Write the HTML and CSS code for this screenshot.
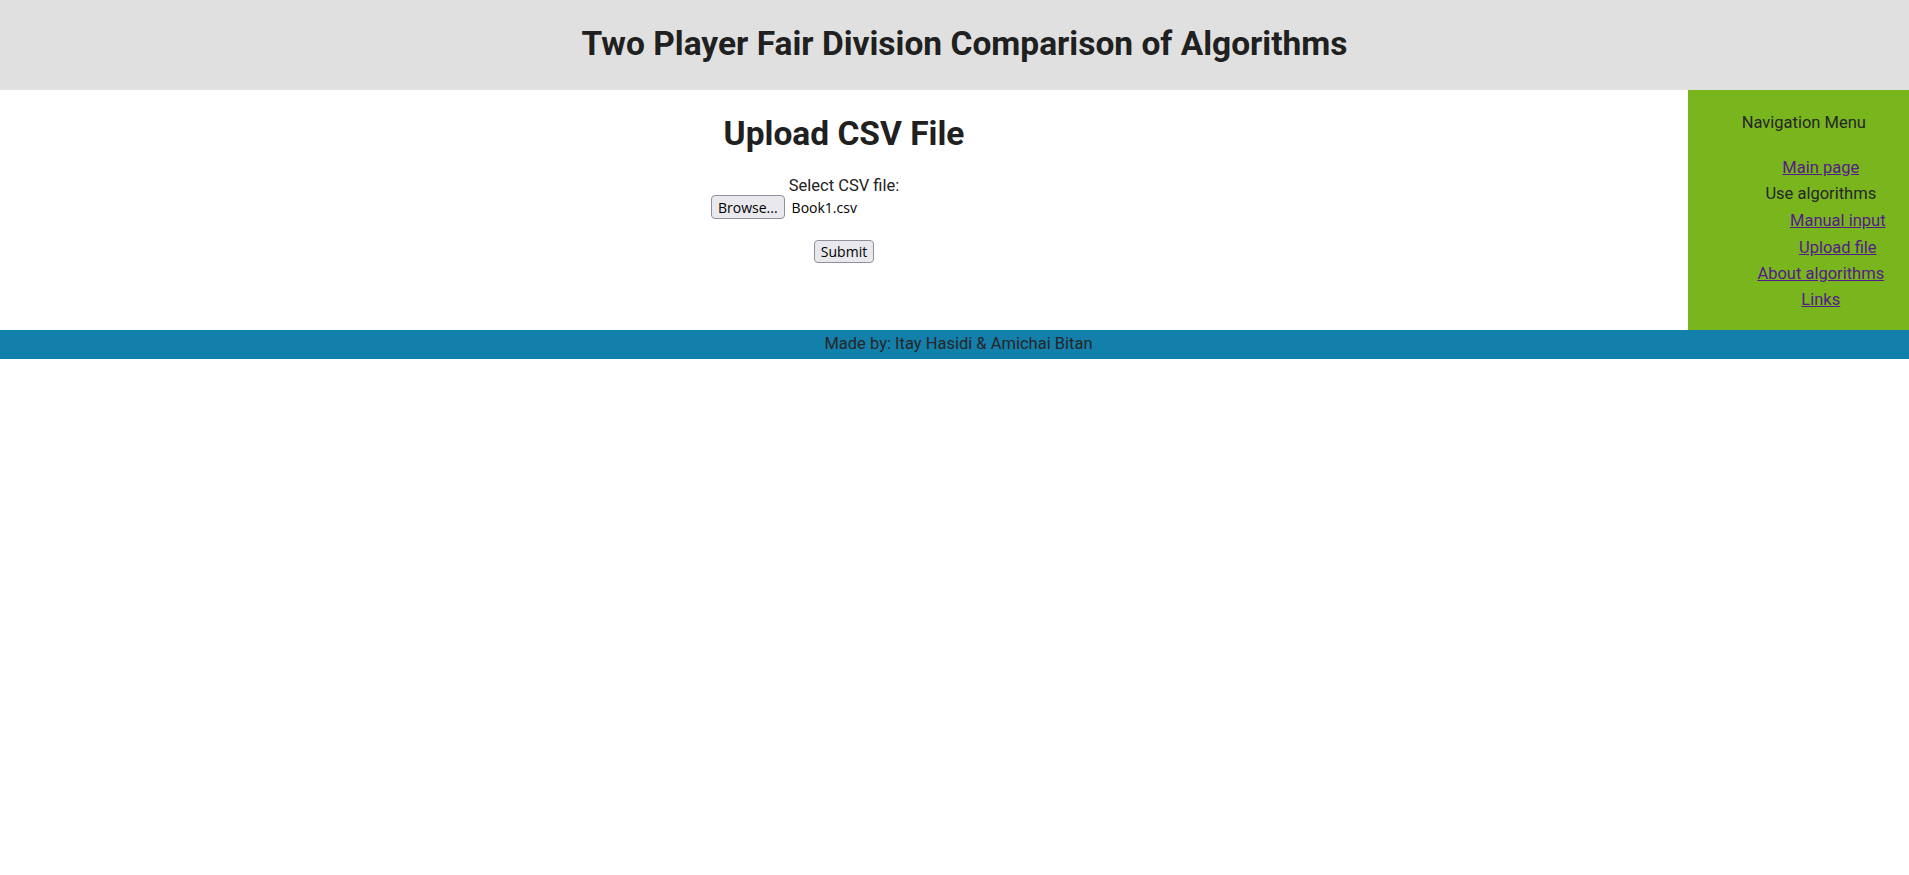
FILE: index.html
```html
<!DOCTYPE html>
<html lang="en">
<head>
<meta charset="utf-8">
<title>Upload CSV File</title>
<link rel="stylesheet" href="styles.css">
</head>
<body>
<header class="site-header">
  <h1 class="site-title">Two Player Fair Division Comparison of Algorithms</h1>
</header>
<div class="layout">
  <main class="content">
    <h1 class="page-title">Upload CSV File</h1>
    <form class="upload-form">
      <label class="field-label">Select CSV file:</label>
      <span class="file-input">
        <span class="btn">Browse...</span>
        <span class="file-name">Book1.csv</span>
      </span>
      <span class="btn submit">Submit</span>
    </form>
  </main>
  <nav class="side-nav">
    <p class="nav-title">Navigation Menu</p>
    <ul class="nav-list">
      <li><a class="nav-link" href="#">Main page</a></li>
      <li>Use algorithms
        <ul class="nav-sub">
          <li><a class="nav-link" href="#">Manual input</a></li>
          <li><a class="nav-link" href="#">Upload file</a></li>
        </ul>
      </li>
      <li><a class="nav-link" href="#">About algorithms</a></li>
      <li><a class="nav-link" href="#">Links</a></li>
    </ul>
  </nav>
</div>
<footer class="site-footer">Made by: Itay Hasidi &amp; Amichai Bitan</footer>
</body>
</html>
```

FILE: styles.css
```css
html, body {
  margin: 0;
  padding: 0;
}
body {
  font-family: Roboto, "Liberation Sans", sans-serif;
  font-size: 16.5px;
  color: #262626;
  background: #ffffff;
}
.site-header {
  background: #e0e0e0;
  height: 90px;
  box-sizing: border-box;
  padding: 23.6px 0 0 20px;
  text-align: center;
}
.site-title {
  margin: 0;
  font-size: 33.5px;
  font-weight: 700;
  line-height: 39.26px;
  color: #202020;
}
.layout {
  display: flex;
  height: 240px;
}
.content {
  flex: 1;
  text-align: center;
}
.page-title {
  margin: 23.9px 0 0;
  font-size: 33.5px;
  font-weight: 700;
  line-height: 39.26px;
  color: #202020;
}
.upload-form {
  display: flex;
  flex-direction: column;
  align-items: center;
  margin-top: 23.7px;
}
.field-label {
  line-height: 18.75px;
  color: #222;
}
.file-input {
  display: flex;
  align-items: center;
  width: 266px;
  gap: 7px;
  margin-top: -0.5px;
}
.btn {
  display: inline-flex;
  align-items: center;
  justify-content: center;
  box-sizing: border-box;
  height: 24px;
  padding: 0 6px;
  border: 1px solid #8f8f9d;
  border-radius: 4px;
  background: #e9e9ed;
  color: #000;
  font-family: "Open Sans", "Liberation Sans", sans-serif;
  font-size: 14px;
}
.file-name {
  font-family: "Open Sans", "Liberation Sans", sans-serif;
  font-size: 14px;
  color: #000;
}
.submit {
  margin-top: 21px;
  width: 60px;
  height: 23px;
}
.side-nav {
  width: 221px;
  flex: none;
  background: #79b51c;
  box-sizing: border-box;
  padding-left: 10.6px;
  text-align: center;
  color: #262626;
}
.nav-title {
  margin: 23.5px 0 0;
  line-height: 18.75px;
}
.nav-list,
.nav-sub {
  list-style: none;
  margin: 0;
  padding: 0 0 0 34px;
}
.nav-list {
  margin-top: 22.5px;
}
.nav-list li {
  padding: 3.8px 0;
  line-height: 18.75px;
}
.nav-sub {
  margin-top: 5px;
  margin-bottom: -3.8px;
}
.nav-link {
  color: #551a8b;
  text-decoration: underline;
}
.site-footer {
  background: #137fab;
  color: #262626;
  text-align: center;
  padding: 5px 0 5px 8px;
  line-height: 18.75px;
}
```
